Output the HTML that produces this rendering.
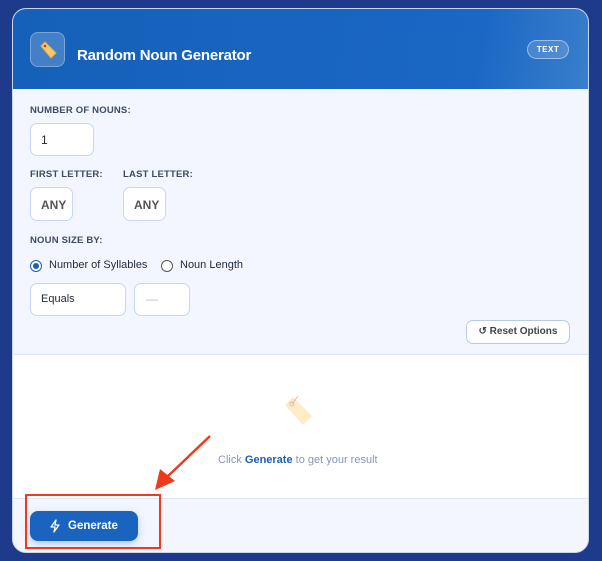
<!DOCTYPE html>
<html><head><style>
*{box-sizing:border-box;margin:0;padding:0}
body{width:602px;height:561px;background:#1e3a8a;font-family:"Liberation Sans",sans-serif;position:relative;overflow:hidden}
.card{position:absolute;left:12px;top:8px;width:577px;height:545px;border-radius:14px;background:#f3f6fe;overflow:hidden;border:1px solid #c9d6f0}
.hdr{position:absolute;left:0;top:0;right:0;height:80px;background:linear-gradient(100deg,#1560b8,#1a67c4 80%,#3a7fcc)}
.ico{position:absolute;left:17px;top:23px;width:35px;height:35px;border-radius:8px;background:rgba(255,255,255,.2);border:1px solid rgba(255,255,255,.3)}
.title{position:absolute;left:64px;top:38px;color:#fff;font-weight:bold;font-size:15px;letter-spacing:-.2px}
.badge{position:absolute;left:514px;top:31px;width:42px;height:19px;border-radius:10px;border:1px solid rgba(255,255,255,.45);background:rgba(255,255,255,.15);color:#fff;font-size:8px;font-weight:bold;text-align:center;line-height:17px;letter-spacing:.5px}
.lbl{position:absolute;font-size:9.5px;color:#3f4a62;letter-spacing:.2px;font-weight:bold}
.inp{position:absolute;background:#fff;border:1px solid #c8d7f2;border-radius:7px;font-size:12px;color:#1f2937}
.txt{position:absolute;font-size:11.5px;color:#1f2937}
.rad{position:absolute;width:12px;height:12px;border-radius:50%;border:1px solid #555;background:#fff}
.res{position:absolute;left:0;top:345px;width:577px;height:145px;background:#fff;border-top:1px solid #dbe4f5;border-bottom:1px solid #dbe4f5}
</style></head><body>
<div class="card">
<div class="hdr">
<div class="ico"><svg width="35" height="35" viewBox="0 0 35 35"><path d="M10 13 L14 9 L25 20 L20 25 Z" fill="#f7c96b" stroke="#e8a84a" stroke-width="1" stroke-linejoin="round"/><circle cx="14" cy="13" r="1.3" fill="#c0392b"/></svg></div>
<div class="title">Random Noun Generator</div>
<div class="badge">TEXT</div>
</div>
<div class="lbl" style="left:17px;top:96px">NUMBER OF NOUNS:</div>
<div class="inp" style="left:17px;top:114px;width:64px;height:33px;padding:9px 10px">1</div>
<div class="lbl" style="left:17px;top:160px">FIRST LETTER:</div>
<div class="lbl" style="left:110px;top:160px">LAST LETTER:</div>
<div class="inp" style="left:17px;top:178px;width:43px;height:34px;padding:10px 10px;color:#555;font-weight:bold;overflow:hidden;white-space:nowrap">ANY</div>
<div class="inp" style="left:110px;top:178px;width:43px;height:34px;padding:10px 10px;color:#555;font-weight:bold;overflow:hidden;white-space:nowrap">ANY</div>
<div class="lbl" style="left:17px;top:226px">NOUN SIZE BY:</div>
<div class="rad" style="left:17px;top:251px;border-color:#1a5fb4"><div style="position:absolute;left:2px;top:2px;width:6px;height:6px;border-radius:50%;background:#1a5fb4"></div></div>
<div class="txt" style="left:36px;top:250px;font-size:11px">Number of Syllables</div>
<div class="rad" style="left:148px;top:251px"></div>
<div class="txt" style="left:167px;top:250px;font-size:11px">Noun Length</div>
<div class="inp" style="left:17px;top:274px;width:96px;height:33px;padding:9px 10px;font-size:11px">Equals</div>
<div class="inp" style="left:121px;top:274px;width:56px;height:33px;padding:8px 11px;color:#bbb">—</div>
<div class="inp" style="left:453px;top:311px;width:104px;height:24px;font-size:10px;font-weight:bold;color:#444;text-align:center;line-height:22px;border-color:#b9c9e6">↺ Reset Options</div>
<div class="res">
<svg style="position:absolute;left:268px;top:37px" width="40" height="40" viewBox="0 0 40 40"><path d="M5 13 L12 6 L30 24 L22 32 Z" fill="#fdeec8" stroke="#fde7b5" stroke-linejoin="round"/><circle cx="11" cy="12" r="2" fill="none" stroke="#eab7b0"/><path d="M11 12 L17 4" stroke="#eab7b0"/></svg>
<div class="txt" style="left:205px;top:99px;font-size:11px;color:#8a97b0">Click <b style="color:#1a5fb4">Generate</b> to get your result</div>
</div>
<div style="position:absolute;left:17px;top:502px;width:108px;height:30px;border-radius:8px;background:#1a63bf;box-shadow:0 3px 8px rgba(26,99,191,.3);color:#fff;font-weight:bold;font-size:11.5px;line-height:30px;padding-left:38px">Generate
<svg style="position:absolute;left:18px;top:8px" width="14" height="14" viewBox="0 0 14 14"><path d="M8 1 L3 8 H7 L6 13 L11 6 H7 Z" fill="none" stroke="#fff" stroke-width="1.3" stroke-linejoin="round"/></svg></div>
</div>
<div style="position:absolute;left:25px;top:494px;width:136px;height:55px;border:2px solid #f03a1e"></div>
<svg style="position:absolute;left:0;top:0" width="602" height="561"><line x1="210" y1="436" x2="166" y2="478" stroke="#f03a1e" stroke-width="2.5"/><path d="M155 490 L160 469 L175 481 Z" fill="#f03a1e"/></svg>
</body></html>
